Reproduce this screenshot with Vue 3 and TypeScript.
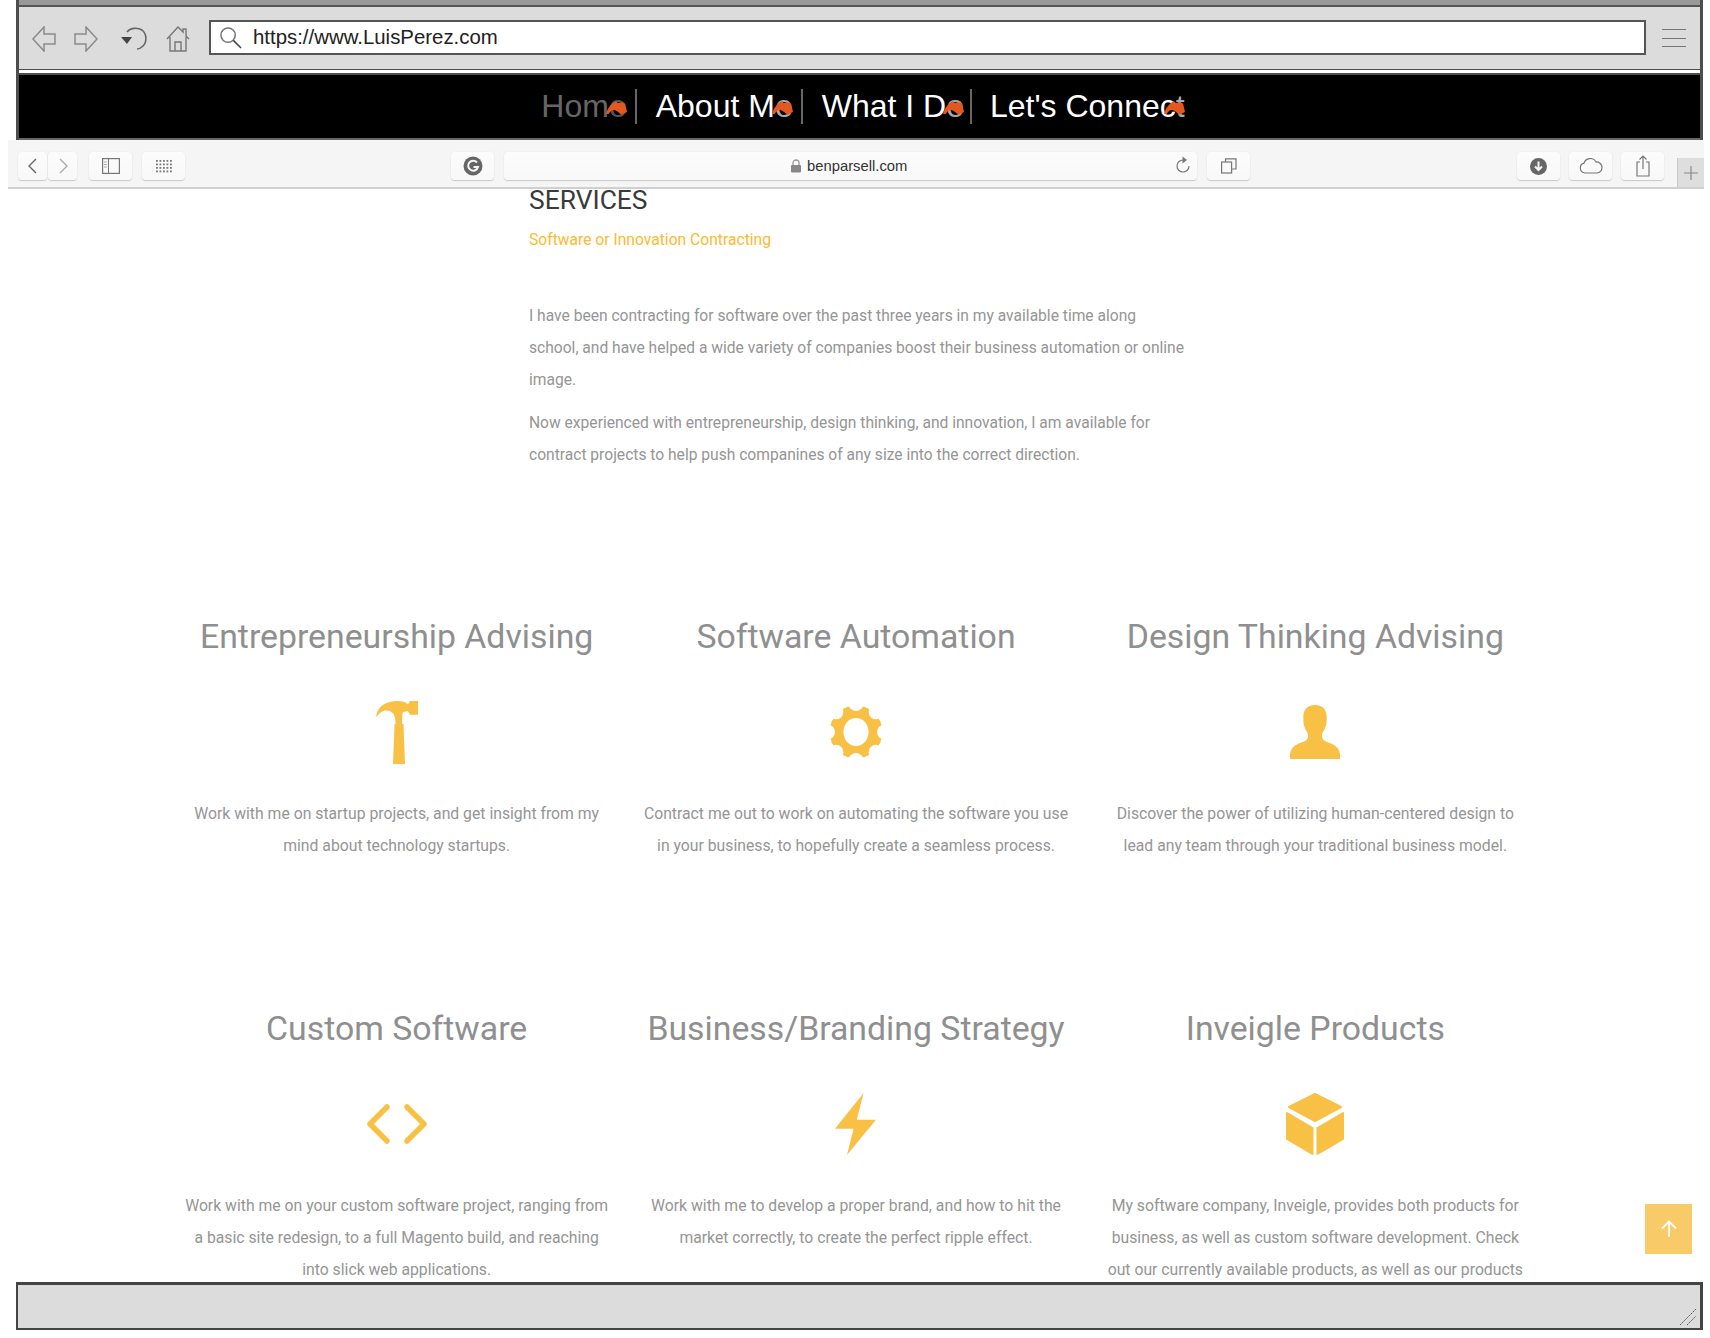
<script setup lang="ts">
interface Card { title: string; icon: string; lines: string[] }
const navItems: string[] = ['Home', 'About Me', 'What I Do', "Let's Connect"]
const intro: string[][] = [
  ['I have been contracting for software over the past three years in my available time along', 'school, and have helped a wide variety of companies boost their business automation or online', 'image.'],
  ['Now experienced with entrepreneurship, design thinking, and innovation, I am available for', 'contract projects to help push companines of any size into the correct direction.'],
]
const cards: Card[] = [
  { title: 'Entrepreneurship Advising', icon: 'hammer', lines: ['Work with me on startup projects, and get insight from my', 'mind about technology startups.'] },
  { title: 'Software Automation', icon: 'gear', lines: ['Contract me out to work on automating the software you use', 'in your business, to hopefully create a seamless process.'] },
  { title: 'Design Thinking Advising', icon: 'person', lines: ['Discover the power of utilizing human-centered design to', 'lead any team through your traditional business model.'] },
  { title: 'Custom Software', icon: 'code', lines: ['Work with me on your custom software project, ranging from', 'a basic site redesign, to a full Magento build, and reaching', 'into slick web applications.'] },
  { title: 'Business/Branding Strategy', icon: 'bolt', lines: ['Work with me to develop a proper brand, and how to hit the', 'market correctly, to create the perfect ripple effect.'] },
  { title: 'Inveigle Products', icon: 'cube', lines: ['My software company, Inveigle, provides both products for', 'business, as well as custom software development. Check', 'out our currently available products, as well as our products'] },
]
const notches: number[] = [0, 45, 90, 135, 180, 225, 270, 315]
</script>

<template>
  <div class="page">
    <header class="chrome">
      <div class="strip"></div>
      <div class="toolbar">
        <svg class="tb-back" width="24" height="26" viewBox="0 0 24 26"><path d="M12 1 1 13l11 12v-7h11V8H12z" fill="none" stroke="#8a8a8a" stroke-width="1.5"/></svg>
        <svg class="tb-fwd" width="24" height="26" viewBox="0 0 24 26"><path d="M12 1l11 12-11 12v-7H1V8h11z" fill="none" stroke="#8a8a8a" stroke-width="1.5"/></svg>
        <svg class="tb-undo" width="28" height="26" viewBox="0 0 28 26"><path d="M7 6c3-4 10-5 15-2 5 4 5 12 1 16-2 2-4 3-6 3" fill="none" stroke="#666" stroke-width="1.6"/><path d="M1 11h11l-5 7z" fill="#444"/></svg>
        <svg class="tb-home" width="24" height="26" viewBox="0 0 24 26"><path d="M1 13 12 1l5 5V3h3v7l3 3M4 11v14h16V11M9 25v-9h6v9" fill="none" stroke="#777" stroke-width="1.4"/></svg>
        <div class="urlbox">
          <svg width="23" height="23" viewBox="0 0 24 24"><circle cx="9.500" cy="9.500" r="7.500" fill="none" stroke="#777" stroke-width="1.600"/><path d="m15 15 8 8" stroke="#444" stroke-width="1.600"/></svg>
          <span class="urltext">https://www.LuisPerez.com</span>
        </div>
        <div class="burger"><i></i><i></i><i></i></div>
      </div>
      <div class="divider"></div>
      <nav class="nav">
        <div v-for="(item, i) in navItems" :key="item" class="nav-item" :class="{ last: i === navItems.length - 1 }">
          <span class="nav-label" :class="{ current: i === 0 }">
            {{ item.slice(0, -1) }}<span class="nav-end">{{ item.slice(-1) }}</span>
            <svg class="blob" width="21" height="14" viewBox="0 0 23 15"><path d="M0 14C2 7 6 2 11 0l2 2c3-1 6-1 8 1l2 9-6 3c-2-1-4-4-7-5-3-1-5 1-7 4z" fill="#e2581f"/></svg>
          </span>
        </div>
      </nav>
    </header>

    <div class="safari">
      <div class="btn-group">
        <button class="sb sb-nav"><svg width="12" height="18" viewBox="0 0 12 18"><path d="M9 2 2 9l7 7" fill="none" stroke="#666" stroke-width="1.400"/></svg></button>
        <button class="sb sb-nav"><svg width="12" height="18" viewBox="0 0 12 18"><path d="m3 2 7 7-7 7" fill="none" stroke="#aaa" stroke-width="1.400"/></svg></button>
      </div>
      <button class="sb sb-wide sb-side"><svg width="18" height="16" viewBox="0 0 18 16"><rect x=".6" y=".6" width="16.800" height="14.800" fill="none" stroke="#777" stroke-width="1.200"/><path d="M6.500 1v14" stroke="#777"/><path d="M2 4h3M2 6.500h3M2 9h3" stroke="#aaa"/></svg></button>
      <button class="sb sb-wide sb-grid"><svg width="18" height="14" viewBox="0 0 18 14"><g fill="#777"><rect v-for="n in 20" :key="n" :x="1 + ((n - 1) % 5) * 3.500" :y="1 + Math.floor((n - 1) / 5) * 3.500" width="1.800" height="1.800"/></g></svg></button>
      <button class="sb sb-wide sb-g"><svg width="20" height="20" viewBox="0 0 20 20"><circle cx="10" cy="10" r="9.500" fill="#666"/><path d="M14 6.500A5 5 0 1 0 15 11h-4.500" fill="none" stroke="#f5f5f5" stroke-width="2"/></svg></button>
      <div class="sb addr">
        <svg class="lock" width="10" height="14" viewBox="0 0 10 14"><path d="M2 6V4a3 3 0 0 1 6 0v2" fill="none" stroke="#999" stroke-width="1.300"/><rect y="6" width="10" height="7.500" rx="1" fill="#888"/></svg>
        <span class="addr-text">benparsell.com</span>
        <svg class="reload" width="14" height="18" viewBox="0 0 14 18"><path d="M7 4a6 6 0 1 0 6 6" fill="none" stroke="#777" stroke-width="1.200"/><path d="M6.500.5 11 4 6.500 7.500z" fill="#777"/></svg>
      </div>
      <button class="sb sb-wide sb-tabs"><svg width="16" height="16" viewBox="0 0 16 16"><rect x=".6" y="4" width="10" height="11" fill="none" stroke="#777" stroke-width="1.200"/><path d="M4.500 4V.8h10.500V11h-4" fill="none" stroke="#777" stroke-width="1.200"/></svg></button>
      <div class="safari-spacer"></div>
      <button class="sb sb-wide"><svg width="17" height="17" viewBox="0 0 17 17"><circle cx="8.500" cy="8.500" r="8.500" fill="#666"/><path d="M8.500 3.500v8M5 8.500l3.500 3.500L12 8.500" fill="none" stroke="#f5f5f5" stroke-width="2"/></svg></button>
      <button class="sb sb-wide"><svg width="24" height="16" viewBox="0 0 24 16"><path d="M6 15a5 5 0 0 1-1-9.800A6.500 6.500 0 0 1 17 4a5.500 5.500 0 0 1 1 11z" fill="none" stroke="#777" stroke-width="1.200"/></svg></button>
      <button class="sb sb-wide"><svg width="14" height="22" viewBox="0 0 14 22"><path d="M4 7H1v14h12V7h-3" fill="none" stroke="#777" stroke-width="1.200"/><path d="M7 14V1M3.500 4.500 7 1l3.500 3.500" fill="none" stroke="#777" stroke-width="1.200"/></svg></button>
      <div class="plus"><svg width="14" height="14" viewBox="0 0 14 14"><path d="M7 0v14M0 7h14" stroke="#888" stroke-width="1.200"/></svg></div>
    </div>

    <main class="main">
      <section class="intro">
        <h2 class="services">SERVICES</h2>
        <p class="subtitle">Software or Innovation Contracting</p>
        <p v-for="(para, i) in intro" :key="i" class="para">
          <span v-for="line in para" :key="line" class="line">{{ line }}</span>
        </p>
      </section>

      <section class="grid">
        <article v-for="card in cards" :key="card.title" class="card">
          <h3 class="card-title">{{ card.title }}</h3>
          <div class="card-icon">
            <svg v-if="card.icon === 'hammer'" width="42" height="63" viewBox="0 0 42 63"><path d="M17 63h12l-1.500-40H26l.3-9c0-3 2-3.700 5.700-3.700l2 3.400h8V0h-8l-2 3.300L28.500 1C24 -.500 18 -.300 12 1.500 5 4 1 8 0 16.500 4 11 7 9 11 9.500c5 .500 8.600 3 8.600 13.500h-1z" fill="#f8c146"/></svg>
            <svg v-else-if="card.icon === 'gear'" width="54" height="54" viewBox="-27 -27 54 54">
              <mask id="gearmask"><circle r="26.500" fill="#fff"/><circle v-for="a in notches" :key="a" :cx="28.500 * Math.sin(a * Math.PI / 180)" :cy="-28.500 * Math.cos(a * Math.PI / 180)" r="7.500" fill="#000"/><ellipse rx="12.500" ry="14" fill="#000"/></mask>
              <circle r="27" fill="#f8c146" mask="url(#gearmask)"/>
            </svg>
            <svg v-else-if="card.icon === 'person'" width="50" height="54" viewBox="0 0 50 54"><path d="M25 0c8 0 12 5 11.700 13-.2 3 .300 5-1.200 9-1.200 3.500-3 5-3.500 7.500-.5 3 .500 5 3 6.500 5 2.500 14 4 15 13v5H0v-5c1-9 10-10.500 15-13 2.500-1.500 3.500-3.500 3-6.500C17.500 27 15.700 25.500 14.500 22c-1.500-4-1-6-1.200-9C13 5 17 0 25 0z" fill="#f8c146"/></svg>
            <svg v-else-if="card.icon === 'code'" width="60" height="40" viewBox="0 0 60 40"><path d="M20 3 3 20l17 17M40 3l17 17-17 17" fill="none" stroke="#f8c146" stroke-width="5.500" stroke-linecap="round" stroke-linejoin="round"/></svg>
            <svg v-else-if="card.icon === 'bolt'" width="41" height="62" viewBox="0 0 41 62"><path d="M28.600 0 0 35.700h18.600L12 62l29-35.300H21.800z" fill="#f8c146"/></svg>
            <svg v-else width="58" height="62" viewBox="0 0 58 62"><g fill="#f8c146" stroke="#f8c146" stroke-width="2" stroke-linejoin="round"><path d="M29 1 55 14 29 28 3 14z"/><path d="M1 20 26.500 35v26L1 46z"/><path d="M57 20 31.500 35v26L57 46z"/></g></svg>
          </div>
          <p class="card-text"><span v-for="line in card.lines" :key="line" class="line">{{ line }}</span></p>
        </article>
      </section>
    </main>

    <footer class="status">
      <svg class="grip" width="18" height="18" viewBox="0 0 18 18"><path d="M1 17 17 1M8 17 17 8" stroke="#555" stroke-width="1" stroke-dasharray="2 1"/></svg>
    </footer>

    <button class="to-top" aria-label="Back to top"><svg width="18" height="18" viewBox="0 0 18 18"><path d="M9 17V2M2 8.500 9 1.500l7 7" fill="none" stroke="#fff" stroke-width="1.800"/></svg></button>
  </div>
</template>

<style scoped>
.page {
  position: relative;
  width: 1710px;
  height: 1338px;
  overflow: hidden;
  display: flex;
  flex-direction: column;
  background: #fff;
  font-family: "Liberation Sans", Arial, sans-serif;
}
.chrome {
  flex: none;
  margin: 0 7px 0 16px;
  height: 140px;
  border-left: 3px solid #4d4d4d;
  border-right: 3px solid #4d4d4d;
  box-sizing: border-box;
  display: flex;
  flex-direction: column;
}
.strip { height: 5px; background: #999; border-bottom: 2px solid #555; flex: none; }
.toolbar {
  position: relative;
  height: 62px;
  flex: none;
  background: #dcdcdc;
  display: flex;
  align-items: center;
  box-sizing: border-box;
  padding-left: 13px;
}
.tb-back { margin-right: 18px; margin-top: 2px; }
.tb-fwd { margin-right: 22px; margin-top: 2px; }
.tb-undo { margin-right: 18px; margin-top: 2px; }
.tb-home { margin-right: 19px; margin-top: 2px; }
.urlbox {
  width: 1437px;
  height: 35px;
  box-sizing: border-box;
  border: 2px solid #555;
  background: #fff;
  display: flex;
  align-items: center;
  padding-left: 8px;
  margin-top: -1px;
}
.urltext { margin-left: 11px; font-size: 20.400px; color: #222; }
.burger {
  margin-left: 16px;
  width: 24px;
  height: 18px;
  display: flex;
  flex-direction: column;
  justify-content: space-between;
}
.burger i { display: block; height: 1px; background: #777; }
.divider { height: 6px; flex: none; background: #fff; border-top: 1px solid #4d4d4d; border-bottom: 2px solid #4d4d4d; box-sizing: border-box; }
.nav {
  flex: 1;
  background: #000;
  border-bottom: 2px solid #666;
  display: flex;
  align-items: center;
  justify-content: center;
  padding-right: 12px;
}
.nav-item {
  height: 35px;
  display: flex;
  align-items: center;
  padding: 0 8px 0 19px;
  border-right: 2px solid #666;
}
.nav-item:nth-child(3) { padding-right: 6px; }
.nav-item.last { border-right: 0; padding: 0 0 0 18px; }
.nav-label {
  position: relative;
  font-size: 32px;
  color: #fff;
  white-space: nowrap;
}
.nav-label.current { color: #666; }
.nav-end { color: #aaa; }
.nav-label.current .nav-end { color: #555; }
.blob { position: absolute; right: 0; bottom: 10px; }
.safari {
  flex: none;
  position: relative;
  margin: 0 6px 0 8px;
  height: 49px;
  box-sizing: border-box;
  background: #f5f5f5;
  border-bottom: 2px solid #d0d0d0;
  display: flex;
  align-items: flex-start;
  padding: 12px 0 0 10px;
}
.btn-group { display: flex; gap: 1px; margin-right: 12px; }
.sb {
  height: 28px;
  padding: 0;
  box-sizing: border-box;
  border: 0;
  border-radius: 4px;
  background: linear-gradient(#fcfcfc, #f8f8f8);
  box-shadow: 0 1px 1px #c8c8c8, 0 0 1px #d4d4d4;
  display: flex;
  align-items: center;
  justify-content: center;
  margin-right: 9px;
}
.sb-nav { width: 29px; margin: 0; }
.sb-wide { width: 43px; }
.sb-side { margin-right: 10px; }
.sb-grid { margin-right: 266px; }
.sb-g { margin-right: 10px; }
.addr {
  position: relative;
  width: 693px;
  margin-right: 10px;
}
.lock { position: absolute; left: 287px; top: 7px; }
.addr-text { position: absolute; left: 303px; top: 6px; font-size: 14.800px; color: #333; }
.reload { position: absolute; right: 7px; top: 4px; }
.safari-spacer { width: 258px; flex: none; }
.plus {
  position: absolute;
  right: 0;
  bottom: 0;
  width: 27px;
  height: 29px;
  background: #dedede;
  border-left: 1px solid #c8c8c8;
  box-sizing: border-box;
  display: flex;
  align-items: center;
  justify-content: center;
}
.main {
  flex: 1;
  min-height: 0;
  overflow: hidden;
  font-family: Roboto, "Open Sans", sans-serif;
}
.intro { margin-left: 529px; width: 680px; }
.services {
  margin: 0;
  font-size: 26.400px;
  line-height: 23px;
  font-weight: 400;
  color: #3a3a3a;
}
.subtitle {
  margin: 16px 0 48px;
  font-size: 15.650px;
  line-height: 24px;
  color: #fdb92f;
}
.para {
  margin: 0 0 11px;
  font-size: 15.600px;
  line-height: 32px;
  color: #959595;
}
.line { display: block; white-space: nowrap; }
.grid {
  margin: 144px 0 0 167px;
  width: 1378px;
  display: grid;
  grid-template-columns: repeat(3, minmax(0, 1fr));
  row-gap: 145px;
  text-align: center;
}
.card-title {
  margin: 0;
  font-size: 33.800px;
  line-height: 44px;
  font-weight: 400;
  color: #8f8f8f;
}
.card-icon {
  margin-top: 38px;
  height: 70px;
  display: flex;
  align-items: center;
  justify-content: center;
}
.card-text {
  margin: 31px 0 0;
  font-size: 15.750px;
  line-height: 32px;
  color: #959595;
}
.status {
  flex: none;
  position: relative;
  margin: 0 7px 8px 16px;
  height: 48px;
  box-sizing: border-box;
  background: #dcdcdc;
  border: 2px solid #444;
  border-top-width: 3px;
  border-right-width: 3px;
}
.grip { position: absolute; right: 3px; bottom: 2px; }
.to-top {
  position: absolute;
  left: 1645px;
  top: 1204px;
  width: 47px;
  height: 50px;
  padding: 0;
  border: 0;
  background: #f8cb68;
  display: flex;
  align-items: center;
  justify-content: center;
}
</style>
